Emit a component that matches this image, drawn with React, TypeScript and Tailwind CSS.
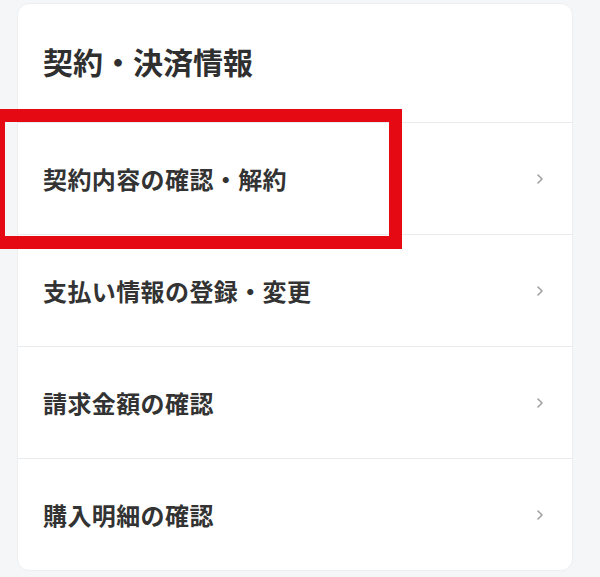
const ITEMS = ['契約内容の確認・解約', '支払い情報の登録・変更', '請求金額の確認', '購入明細の確認'];

function Chevron() {
  return (
    <svg width="10" height="14" viewBox="0 0 10 14" fill="none">
      <path d="M3 3l4 4-4 4" stroke="#a0a0a0" strokeWidth="1.6" strokeLinecap="round" strokeLinejoin="round" />
    </svg>
  );
}

export default function App() {
  return (
    <div
      className="relative h-[577px] w-[600px] overflow-hidden bg-[#f4f6f8] pt-[3px]"
      style={{ fontFamily: '"Noto Sans CJK JP", "Noto Sans", sans-serif' }}
    >
      <div className="ml-[17px] w-[556px] overflow-hidden rounded-xl border border-[#eceef0] bg-white">
        {/* header */}
        <div className="flex h-[118px] items-center px-[25px] pb-[4px]">
          <h2 className="text-[30px] font-bold text-[#2f2f2f]">契約・決済情報</h2>
        </div>
        {ITEMS.map((label) => (
          <div key={label} className="flex h-[112px] items-center justify-between border-t border-[#e9ebee] pl-[25px] pr-[27px]">
            <span className="text-[24px] font-bold tracking-[0.4px] text-[#333]">{label}</span>
            <Chevron />
          </div>
        ))}
      </div>

      {/* highlight frame */}
      <div className="absolute left-[-8px] top-[109px] h-[140px] w-[410px] border-[13px] border-[#e50914]" />
    </div>
  );
}
